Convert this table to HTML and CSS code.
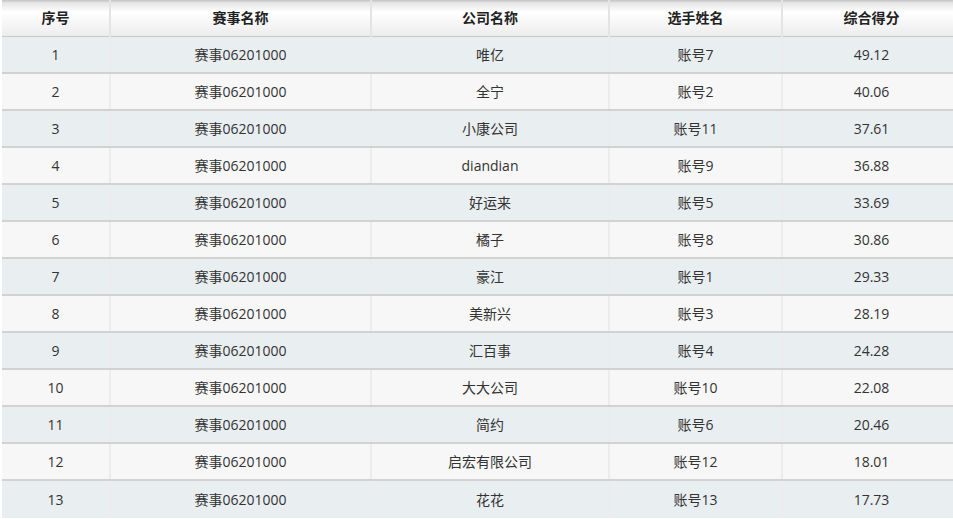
FILE: index.html
```html
<!DOCTYPE html>
<html lang="zh">
<head>
<meta charset="utf-8">
<link rel="stylesheet" href="styles.css">
</head>
<body>
<div class="wrap">
<table class="rank">
<colgroup>
<col class="c1"><col class="c2"><col class="c3"><col class="c4"><col class="c5">
</colgroup>
<thead>
<tr><th>序号</th><th>赛事名称</th><th>公司名称</th><th>选手姓名</th><th>综合得分</th></tr>
</thead>
<tbody>
<tr><td>1</td><td>赛事06201000</td><td>唯亿</td><td>账号7</td><td>49.12</td></tr>
<tr><td>2</td><td>赛事06201000</td><td>全宁</td><td>账号2</td><td>40.06</td></tr>
<tr><td>3</td><td>赛事06201000</td><td>小康公司</td><td>账号11</td><td>37.61</td></tr>
<tr><td>4</td><td>赛事06201000</td><td>diandian</td><td>账号9</td><td>36.88</td></tr>
<tr><td>5</td><td>赛事06201000</td><td>好运来</td><td>账号5</td><td>33.69</td></tr>
<tr><td>6</td><td>赛事06201000</td><td>橘子</td><td>账号8</td><td>30.86</td></tr>
<tr><td>7</td><td>赛事06201000</td><td>豪江</td><td>账号1</td><td>29.33</td></tr>
<tr><td>8</td><td>赛事06201000</td><td>美新兴</td><td>账号3</td><td>28.19</td></tr>
<tr><td>9</td><td>赛事06201000</td><td>汇百事</td><td>账号4</td><td>24.28</td></tr>
<tr><td>10</td><td>赛事06201000</td><td>大大公司</td><td>账号10</td><td>22.08</td></tr>
<tr><td>11</td><td>赛事06201000</td><td>简约</td><td>账号6</td><td>20.46</td></tr>
<tr><td>12</td><td>赛事06201000</td><td>启宏有限公司</td><td>账号12</td><td>18.01</td></tr>
<tr><td>13</td><td>赛事06201000</td><td>花花</td><td>账号13</td><td>17.73</td></tr>
</tbody>
</table>
</div>
</body>
</html>
```
FILE: styles.css
```css
html, body {
  margin: 0;
  padding: 0;
  background: #ffffff;
}
body {
  font-family: "Open Sans", "Noto Sans CJK SC", sans-serif;
  font-size: 14px;
  color: #333333;
  overflow: hidden;
}
.wrap {
  padding-left: 2px;
  width: 960px;
}
.rank {
  border-collapse: collapse;
  table-layout: fixed;
  width: 958px;
}
.c1 { width: 108px; }
.c2 { width: 261px; }
.c3 { width: 238px; }
.c4 { width: 173px; }
.c5 { width: 178px; }
.rank th,
.rank td {
  text-align: center;
  padding: 0;
  border-left: 2px solid #ececec;
  line-height: 18px;
}
.rank th:first-child,
.rank td:first-child {
  border-left: none;
}
.rank th {
  height: 36px;
  font-weight: bold;
  color: #222222;
  background: linear-gradient(to bottom, #c4c4c4 0px, #e6e6e6 3px, #ffffff 12px, #f6f6f6 24px, #ececec 36px);
  border-bottom: 1px solid #c8c8c8;
  border-left-color: #e4e4e4;
}
.rank td {
  height: 35px;
  border-bottom: 2px solid #d2d2d2;
}
.rank tbody tr:nth-child(odd) td {
  background: #e9eef1;
}
.rank tbody tr:nth-child(even) td {
  background: #f7f7f7;
}
.rank tbody tr:last-child td {
  border-bottom: none;
  height: 37px;
}
```
